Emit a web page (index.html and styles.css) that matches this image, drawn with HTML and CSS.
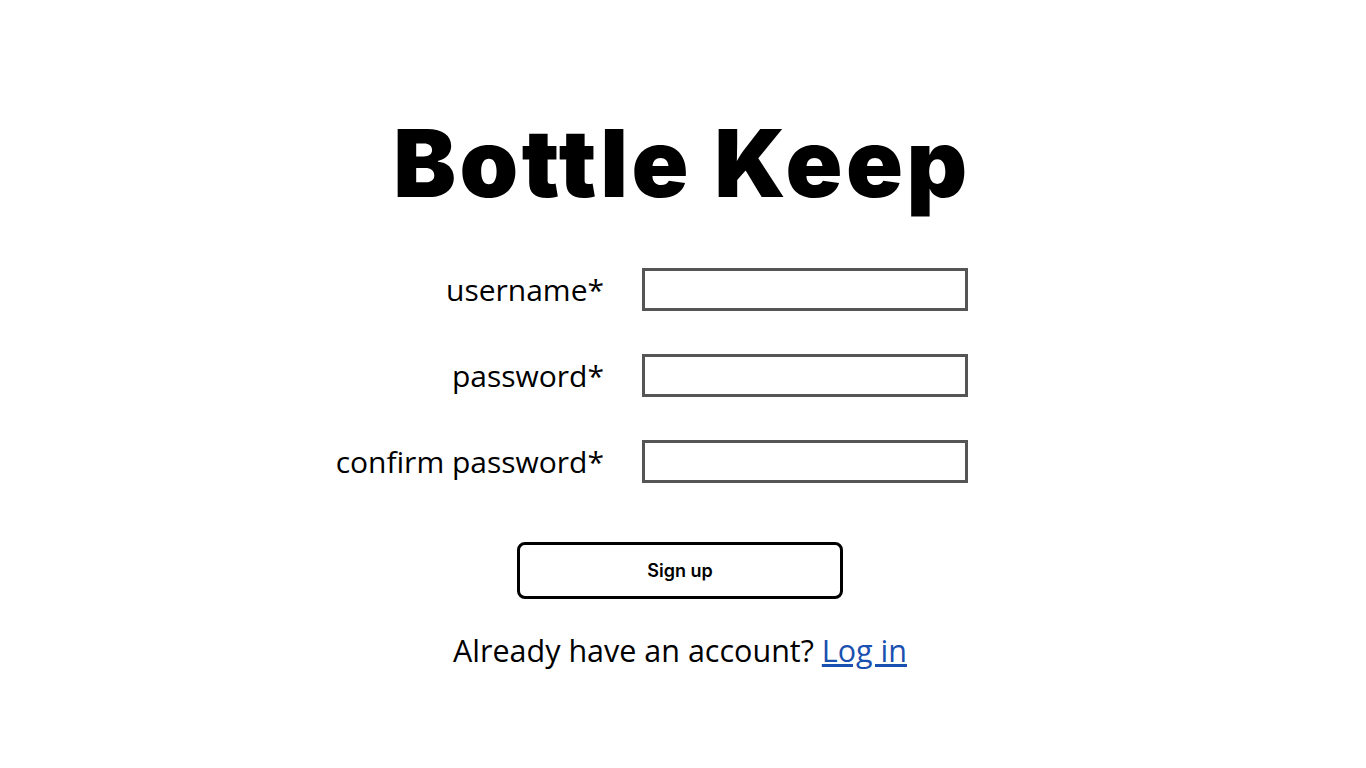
FILE: index.html
```html
<!DOCTYPE html>
<html>
<head>
    <title>Bottle Keep - Sign up</title>
    <meta charset="utf-8">
    <link rel="stylesheet" href="styles.css">
</head>
<body>
    <div id="main_wrap">
        <h1 class="title">Bottle Keep</h1>

        <form class="signup" action="#">
            <label for="username_in">username*</label>
            <input id="username_in" type="text" name="username">

            <label for="password_in">password*</label>
            <input id="password_in" type="password" name="password">

            <label for="confirm_in">confirm password*</label>
            <input id="confirm_in" type="password" name="confirm">
        </form>

        <button class="btn signup-btn" type="submit">Sign up</button>

        <p class="switch">Already have an account? <a href="#">Log in</a></p>
    </div>
</body>
</html>
```

FILE: styles.css
```css
* {
    margin: 0;
    padding: 0;
    box-sizing: border-box;
}

html,
body {
    height: 100%;
}

body {
    background: #fff;
    color: #000;
    font-family: "Open Sans", "Noto Sans", sans-serif;
}

#main_wrap {
    display: flex;
    flex-direction: column;
    align-items: center;
    padding-top: 108px;
}

.title {
    font-family: Inter, "Liberation Sans", sans-serif;
    font-weight: 900;
    font-size: 94px;
    line-height: 110px;
    letter-spacing: 3.5px;
    margin-left: -2px;
}

.signup {
    display: grid;
    grid-template-columns: 326px 326px;
    column-gap: 38px;
    row-gap: 43px;
    align-items: center;
    justify-content: center;
    width: 100%;
    padding-right: 120px;
    margin-top: 50px;
}

.signup label {
    text-align: right;
    font-size: 30px;
    line-height: 43px;
}

.signup input {
    height: 43px;
    border: 3px solid #555;
    border-radius: 0;
    background: #fff;
    font-size: 20px;
    padding: 0 10px;
}

.btn {
    font-family: Inter, "Liberation Sans", sans-serif;
    font-weight: 600;
    font-size: 18px;
    background: #fff;
    color: #000;
    border: 3px solid #000;
    border-radius: 8px;
    width: 326px;
    height: 57px;
    margin-top: 59px;
    margin-left: -6px;
    cursor: pointer;
}

.switch {
    font-size: 30.5px;
    margin-top: 30px;
    margin-left: -6px;
}

.switch a {
    color: #1a50b0;
}
```
